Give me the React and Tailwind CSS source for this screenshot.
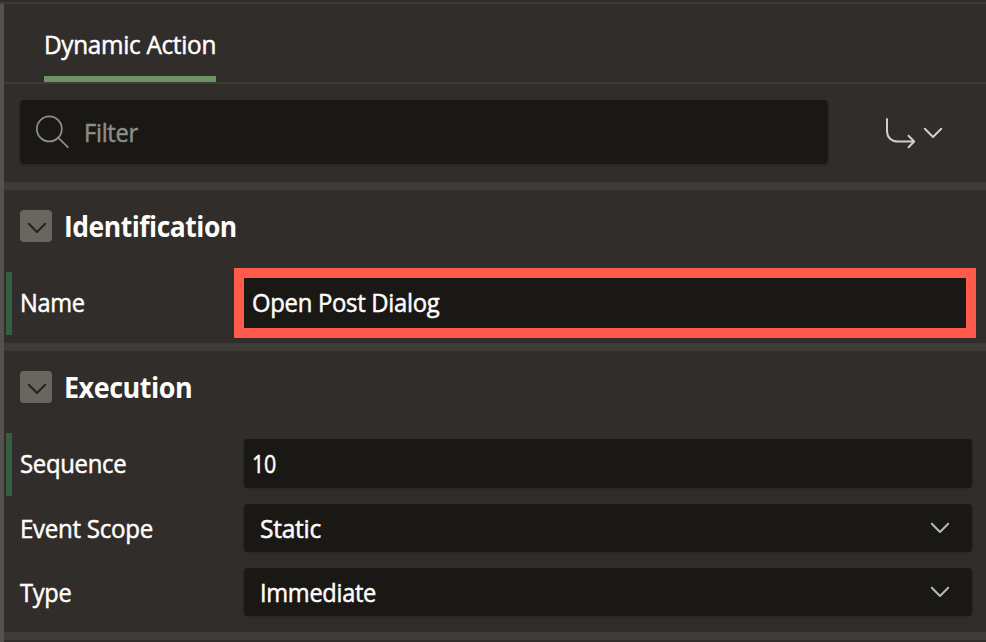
import { useLayoutEffect, useRef, useState } from "react";

function Chevron({ className = "" }) {
  return (
    <svg width="20" height="12" viewBox="0 0 20 12" fill="none" stroke="currentColor" strokeWidth="2" strokeLinecap="round" strokeLinejoin="round" className={className}>
      <path d="M1.8 1.8 10 10l8.2-8.2" />
    </svg>
  );
}

// Condenses a line of text horizontally so that it fills the given width.
function Label({ children, width, className = "" }) {
  const ref = useRef(null);
  const [scale, setScale] = useState(1);
  useLayoutEffect(() => {
    const fit = () => setScale(width / ref.current.offsetWidth);
    fit();
    document.fonts.ready.then(fit);
  }, [width]);
  return (
    <span className={`block h-9 leading-9 whitespace-nowrap ${className}`} style={{ width }}>
      <span ref={ref} className="inline-block origin-left" style={{ transform: `scaleX(${scale})` }}>
        {children}
      </span>
    </span>
  );
}

function Section({ title, width, children }) {
  return (
    <section className="border-b-8 border-[#3f3b37]">
      <div className="flex h-[82px] items-start pt-5 pl-4">
        <span className="flex h-8 w-8 items-center justify-center rounded bg-[#69655f] pt-[3px] pl-px text-[#24211f]">
          <Chevron />
        </span>
        <h2 className="ml-3 flex h-8 items-center text-[28px] font-bold tracking-[-0.5px] text-[#fffdfb] [-webkit-text-stroke:0px]">
          <Label width={width}>{title}</Label>
        </h2>
      </div>
      {children}
    </section>
  );
}

function Input({ children, tall = false, select = false }) {
  return (
    <div className={`flex w-[728px] items-center rounded bg-[#191815] shadow-[0_1px_3px_rgba(0,0,0,0.2)] ${tall ? "h-[49px] pb-px" : "h-12"} ${select ? "justify-between pr-[22px] pl-4" : "pl-2"}`}>
      {children}
      {select && <Chevron className="text-[#bab8b5]" />}
    </div>
  );
}

export default function App() {
  return (
    <main className="flex h-[642px] w-[986px] flex-col overflow-hidden bg-[#312d2a] font-['Open_Sans','Noto_Sans',sans-serif] text-[25px] tracking-[-0.3px] text-[#fffdfb] [-webkit-text-stroke:0.5px_currentColor]">
      <div className="mt-[2px] h-[2px] shrink-0 bg-[#3f3b37]" />
      <div className="h-[638px] border-l-4 border-[#55514d]">
        <nav className="flex h-20 border-b-2 border-[#3f3b37] pl-10">
          <button className="flex h-[78px] w-[172px] border-b-6 border-[#6b9363] pt-[22px] text-left">
            <Label width={172}>Dynamic Action</Label>
          </button>
        </nav>
        <div className="flex h-[106px] items-start border-b-8 border-[#3f3b37] pt-4 pl-4">
          <div className="flex h-16 w-[808px] items-center rounded bg-[#191815] pl-4 text-[#8f8d89] shadow-[0_1px_3px_rgba(0,0,0,0.2)]">
            <svg width="34" height="34" viewBox="0 0 34 34" fill="none" stroke="currentColor" strokeWidth="1.8" strokeLinecap="round">
              <circle cx="13.3" cy="13.9" r="12.5" />
              <path d="m22.2 22.6 9.6 9.6" />
            </svg>
            <Label width={54} className="ml-[14px]">Filter</Label>
          </div>
          <button className="mt-[18px] ml-[57px] flex items-start text-[#d1cfcc]">
            <svg width="31" height="31" viewBox="0 0 31 31" fill="none" stroke="currentColor" strokeWidth="2" strokeLinecap="round" strokeLinejoin="round">
              <path d="M2 1v12c0 6.5 4.5 10.5 11 10.5h16M23.5 17.8l5.7 5.7-5.7 5.7" />
            </svg>
            <Chevron className="mt-[9px] ml-[6.5px]" />
          </button>
        </div>
        <Section title="Identification" width={173}>
          <div className="flex h-[71px] items-start pl-[2px]">
            <div className="flex h-[63px] w-[228px] items-center border-l-6 border-[#375d43] pb-[3px] pl-2">
              <Label width={65}>Name</Label>
            </div>
            <div className="-mt-1 h-[70px] w-[742px] bg-[#ff5a4b] p-[10px]">
              <div className="flex h-[50px] items-center bg-[#191815] pb-[2px] pl-2">
                <Label width={187}>Open Post Dialog</Label>
              </div>
            </div>
          </div>
        </Section>
        <Section title="Execution" width={128}>
          <div className="flex h-[71px] items-start pl-[2px]">
            <div className="flex h-[63px] w-[238px] items-center border-l-6 border-[#375d43] pb-[3px] pl-2">
              <Label width={106}>Sequence</Label>
            </div>
            <div className="pt-[6px]">
              <Input tall><Label width={24}>10</Label></Input>
            </div>
          </div>
          <div className="flex h-16 items-start pl-4">
            <div className="flex h-12 w-[224px] items-center"><Label width={133}>Event Scope</Label></div>
            <Input select><Label width={61}>Static</Label></Input>
          </div>
          <div className="flex h-16 items-start pl-4">
            <div className="flex h-12 w-[224px] items-center"><Label width={51}>Type</Label></div>
            <Input select><Label width={116}>Immediate</Label></Input>
          </div>
        </Section>
      </div>
    </main>
  );
}
